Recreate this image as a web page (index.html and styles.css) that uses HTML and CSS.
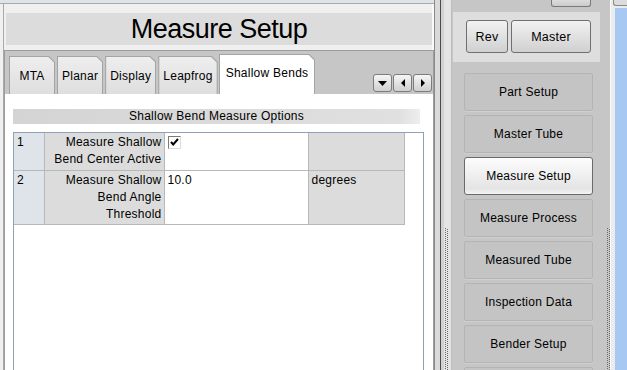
FILE: index.html
```html
<!DOCTYPE html>
<html lang="en">
<head>
    <meta charset="UTF-8">
    <title>Measure Setup</title>
    <link rel="stylesheet" href="styles.css">
</head>
<body>
    <div class="main">
        <div class="left-wrap">
            <div class="top-strip"></div>
            <div class="left">
                <div class="page-title">Measure Setup</div>
                <div class="tabs">
                    <div class="tab-row">
                        <div class="tab"><span>MTA</span></div>
                        <div class="tab"><span>Planar</span></div>
                        <div class="tab"><span>Display</span></div>
                        <div class="tab"><span>Leapfrog</span></div>
                        <div class="tab active"><span>Shallow Bends</span></div>
                        <div class="tab-scroll">
                            <div class="scroll-btn">
                                <svg width="9" height="5" viewBox="0 0 9 5"><path d="M0 0H9L4.5 5Z" fill="#000"/></svg>
                            </div>
                            <div class="scroll-btn">
                                <svg width="4" height="8" viewBox="0 0 4 8"><path d="M4 0V8L0 4Z" fill="#000"/></svg>
                            </div>
                            <div class="scroll-btn">
                                <svg width="4" height="8" viewBox="0 0 4 8"><path d="M0 0V8L4 4Z" fill="#000"/></svg>
                            </div>
                        </div>
                    </div>
                    <div class="tab-panel">
                        <div class="section-head">Shallow Bend Measure Options</div>
                        <div class="grid-box">
                            <table class="options">
                                <tr class="r1">
                                    <td class="num">1</td>
                                    <td class="label">Measure Shallow Bend Center Active</td>
                                    <td class="value"><span class="check"><svg width="9" height="8" viewBox="0 0 9 8"><path d="M1 4L3.2 6.5L8 1" fill="none" stroke="#000" stroke-width="2"/></svg></span></td>
                                    <td class="unit"></td>
                                </tr>
                                <tr class="r2">
                                    <td class="num">2</td>
                                    <td class="label">Measure Shallow Bend Angle Threshold</td>
                                    <td class="value">10.0</td>
                                    <td class="unit">degrees</td>
                                </tr>
                            </table>
                        </div>
                    </div>
                </div>
            </div>
        </div>
        <div class="splitter"></div>
        <div class="right">
            <div class="top-btn"></div>
            <div class="rev-group">
                <button class="btn rev">Rev</button>
                <button class="btn master">Master</button>
            </div>
            <div class="nav">
                <div class="nav-btn">Part Setup</div>
                <div class="nav-btn">Master Tube</div>
                <div class="nav-btn active">Measure Setup</div>
                <div class="nav-btn">Measure Process</div>
                <div class="nav-btn">Measured Tube</div>
                <div class="nav-btn">Inspection Data</div>
                <div class="nav-btn">Bender Setup</div>
                <div class="nav-btn"></div>
            </div>
        </div>
        <div class="edge">
            <div class="edge-btn"></div>
            <div class="desk"></div>
        </div>
    </div>
</body>
</html>
```

FILE: styles.css
```css
* {
    box-sizing: border-box;
}
body {
    margin: 0;
    width: 627px;
    height: 370px;
    overflow: hidden;
    font-family: "Liberation Sans", Arial, sans-serif;
    font-size: 12px;
    letter-spacing: 0.25px;
    color: #000;
    background-color: #f0f0f0;
}
.main {
    display: flex;
    height: 370px;
    overflow: hidden;
}
.left-wrap {
    width: 434px;
    background-color: #f0f0f0;
}
.top-strip {
    height: 4px;
    background-color: #dfe4ea;
    border-bottom: 1px solid #a8acb0;
}
.left {
    margin-left: 3px;
    height: 366px;
    padding-top: 9px;
    border-left: 1px solid #a9a9a9;
    background: linear-gradient(to right, #f0f0f0 428px, #fafafa 428px);
}
.page-title {
    margin-left: 2px;
    width: 426px;
    height: 32px;
    line-height: 32px;
    background-color: #dcdcdc;
    text-align: center;
    font-size: 27px;
    letter-spacing: -0.5px;
    color: #000;
}
.tabs {
    margin-top: 5px;
    width: 430px;
    height: 330px;
    border: 1px solid #9c9c9c;
    border-bottom: none;
    background-color: #c6c6c6;
    display: flex;
    flex-direction: column;
}
.tab-row {
    display: flex;
    align-items: flex-end;
    height: 43px;
    flex-shrink: 0;
    padding-left: 4px;
    gap: 2px;
}
.tab {
    height: 38px;
    min-width: 46px;
    padding: 1px 1px 0 1px;
    background-color: #a4a4a4;
    clip-path: polygon(0 0, calc(100% - 6px) 0, 100% 6px, 100% 100%, 0 100%);
}
.tab span {
    display: block;
    height: 100%;
    padding: 1px 4px 0;
    line-height: 36px;
    text-align: center;
    background: linear-gradient(#eeeeee, #dedede);
    clip-path: polygon(0 0, calc(100% - 5.6px) 0, 100% 5.6px, 100% 100%, 0 100%);
}
.tab.active {
    height: 40px;
    margin-left: -1px;
}
.tab.active span {
    padding: 0 6px;
    line-height: 36px;
    background: #fff;
}
.tab-scroll {
    display: flex;
    gap: 1px;
    margin: 0 1px 2px auto;
}
.scroll-btn {
    width: 19px;
    height: 18px;
    border: 1px solid #7c7c7c;
    border-radius: 3px;
    background: linear-gradient(#f6f6f6, #cfcfcf);
    display: flex;
    align-items: center;
    justify-content: center;
}
.tab-panel {
    flex: 1;
    background-color: #fff;
    padding: 15px 0 0 8px;
}
.section-head {
    width: 407px;
    height: 15px;
    line-height: 15px;
    text-align: center;
    background: linear-gradient(to right, #d4d4d4, #e0e0e0 95%, #eeeeee);
}
.grid-box {
    margin-top: 8px;
    width: 411px;
    height: 260px;
    border: 1px solid #8fa1b5;
    border-bottom: none;
}
.options {
    border-collapse: collapse;
    width: 390px;
    table-layout: fixed;
}
.options td {
    vertical-align: top;
    padding: 1px 3px 0 3px;
    line-height: 17px;
    border-right: 1px solid #b8b8b8;
    border-bottom: 1px solid #b8b8b8;
    background-color: #dcdcdc;
}
.options tr.r1 {
    height: 37px;
}
.options tr.r2 {
    height: 54px;
}
.options .num {
    width: 30px;
    background-color: #dfe3ea;
}
.options .label {
    width: 120px;
    padding-right: 2px;
    text-align: right;
}
.options .value {
    width: 144px;
    background-color: #fff;
}
.options .unit {
    width: 96px;
}
.check {
    display: block;
    width: 13px;
    height: 13px;
    margin-top: 2px;
    border: 1px solid;
    border-color: #7a7a7a #dcdcdc #dcdcdc #7a7a7a;
    background-color: #fff;
    line-height: 0;
    padding: 1px 0 0 1px;
}
.splitter {
    width: 18px;
    border-left: 1px solid #8a8a8a;
    border-right: 1px solid #bdbdbd;
    background-color: #e4e4e4;
    background-image:
        linear-gradient(to right, #dadada 0 5px, #4a4a4a 5px 6px, #d2d2d2 6px 9px, transparent 9px),
        repeating-linear-gradient(#6a6a6a 0 1px, transparent 1px 2px),
        repeating-linear-gradient(#6a6a6a 0 1px, transparent 1px 2px);
    background-size: 100% 100%, 1px 142px, 1px 142px;
    background-position: 0 0, 10px 228px, 12px 229px;
    background-repeat: no-repeat;
}
.right {
    width: 158px;
    display: flex;
    flex-direction: column;
    background-color: #c6c6c6;
    background-image:
        repeating-linear-gradient(#6a6a6a 0 1px, transparent 1px 2px),
        repeating-linear-gradient(#6a6a6a 0 1px, transparent 1px 2px);
    background-size: 1px 142px, 1px 142px;
    background-position: 155px 228px, 157px 229px;
    background-repeat: no-repeat;
}
.top-btn {
    flex-shrink: 0;
    align-self: flex-end;
    margin-right: 19px;
    width: 40px;
    height: 7px;
    border: 1px solid #7a7a7a;
    border-top: none;
    border-radius: 0 0 3px 3px;
    background: linear-gradient(#dcdcdc, #cbcbcb);
}
.rev-group {
    flex-shrink: 0;
    display: flex;
    gap: 3px;
    margin: 5px 10px 0 1px;
    height: 50px;
    padding: 8px 9px 0 13px;
    background-color: #dedede;
}
.btn {
    height: 33px;
    border: 1px solid #6f6f6f;
    border-radius: 3px;
    background: linear-gradient(#f2f2f2, #d0d0d0);
    font-family: inherit;
    font-size: 12.5px;
    letter-spacing: 0.25px;
    color: #000;
    padding: 0;
}
.btn.rev {
    width: 42px;
}
.btn.master {
    width: 80px;
}
.nav {
    flex-shrink: 0;
    margin-top: 11px;
    padding-left: 12px;
    display: flex;
    flex-direction: column;
    gap: 4px;
}
.nav-btn {
    width: 129px;
    height: 38px;
    flex-shrink: 0;
    line-height: 36px;
    text-align: center;
    border: 1px solid #b4b4b4;
    border-radius: 2px;
    box-shadow: 0 1px 0 #d0d0d0;
    background-color: #c4c4c4;
}
.nav-btn.active {
    border-color: #6a6a6a;
    border-radius: 3px;
    background: linear-gradient(#fdfdfd, #e4e4e4 85%, #f4f4f4);
    box-shadow: none;
}
.edge {
    flex: 1;
    border-left: 1px solid #fafafa;
    background-color: #ececec;
}
.edge-btn {
    margin-left: 2px;
    height: 6px;
    border: 1px solid #8a8a8a;
    border-top: none;
    border-right: none;
    border-radius: 0 0 0 3px;
    background-color: #dcdcdc;
}
.desk {
    margin: 2px 0 0 4px;
    height: 362px;
    background-color: #a8c8f4;
}
```
